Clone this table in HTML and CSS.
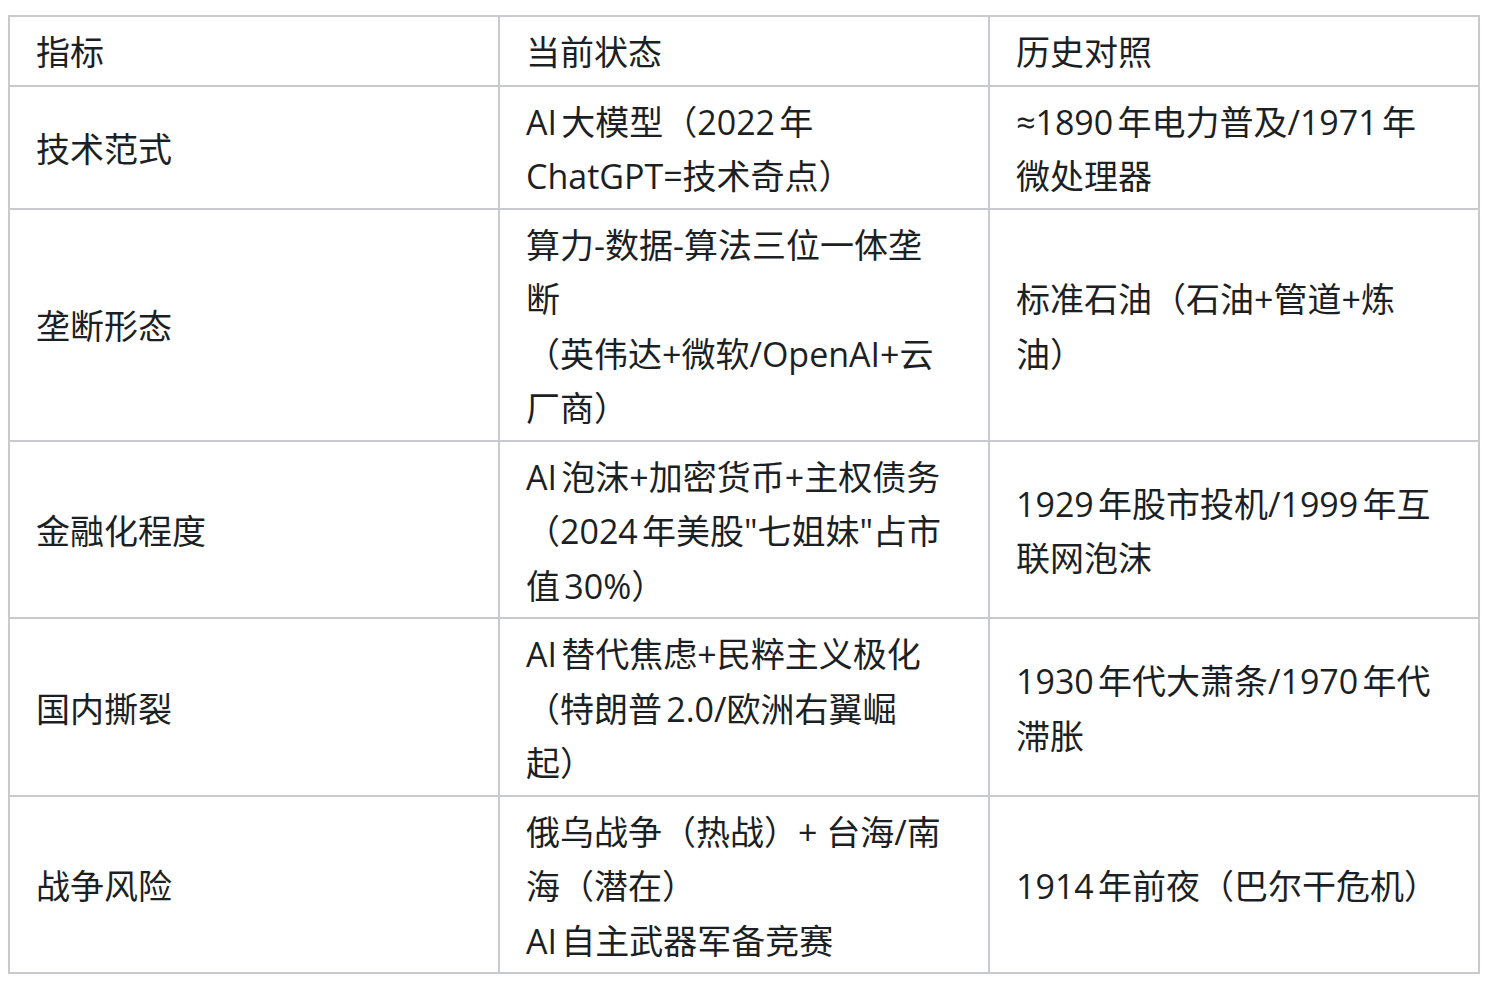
FILE: index.html
```html
<!DOCTYPE html>
<html lang="zh-CN">
<head>
<meta charset="utf-8">
<title>指标对照</title>
<link rel="stylesheet" href="styles.css">
</head>
<body>
<table class="grid">
  <colgroup>
    <col class="col">
    <col class="col">
    <col class="col">
  </colgroup>
  <thead>
    <tr>
      <th>指标</th>
      <th>当前状态</th>
      <th>历史对照</th>
    </tr>
  </thead>
  <tbody>
    <tr>
      <td>技术范式</td>
      <td>AI大模型（2022年<br>ChatGPT=技术奇点）</td>
      <td>≈1890年电力普及/1971年<br>微处理器</td>
    </tr>
    <tr>
      <td>垄断形态</td>
      <td>算力-数据-算法三位一体垄<br>断<br>（英伟达+微软/OpenAI+云<br>厂商）</td>
      <td>标准石油（石油+管道+炼<br>油）</td>
    </tr>
    <tr>
      <td>金融化程度</td>
      <td>AI泡沫+加密货币+主权债务<br>（2024年美股"七姐妹"占市<br>值30%）</td>
      <td>1929年股市投机/1999年互<br>联网泡沫</td>
    </tr>
    <tr>
      <td>国内撕裂</td>
      <td>AI替代焦虑+民粹主义极化<br>（特朗普2.0/欧洲右翼崛<br>起）</td>
      <td>1930年代大萧条/1970年代<br>滞胀</td>
    </tr>
    <tr>
      <td>战争风险</td>
      <td>俄乌战争（热战）+ 台海/南<br>海（潜在）<br>AI自主武器军备竞赛</td>
      <td>1914年前夜（巴尔干危机）</td>
    </tr>
  </tbody>
</table>
</body>
</html>
```

FILE: styles.css
```css
html, body {
  margin: 0;
  padding: 0;
  background: #ffffff;
}
body {
  padding: 15px 8px 0 8px;
  font-family: "Open Sans", "Noto Sans CJK SC", sans-serif;
  color: #1c1f23;
}
.grid {
  width: 1472px;
  border-collapse: collapse;
  table-layout: fixed;
}
.grid .col {
  width: 33.333%;
}
.grid th,
.grid td {
  border: 2px solid #c8cacf;
  padding: 8px 26px 4px 26px;
  font-size: 34px;
  line-height: 54.5px;
  font-weight: 400;
  text-align: left;
  vertical-align: middle;
  white-space: nowrap;
  text-autospace: normal;
}
.grid th {
  padding-top: 8px;
  padding-bottom: 5px;
}
```
